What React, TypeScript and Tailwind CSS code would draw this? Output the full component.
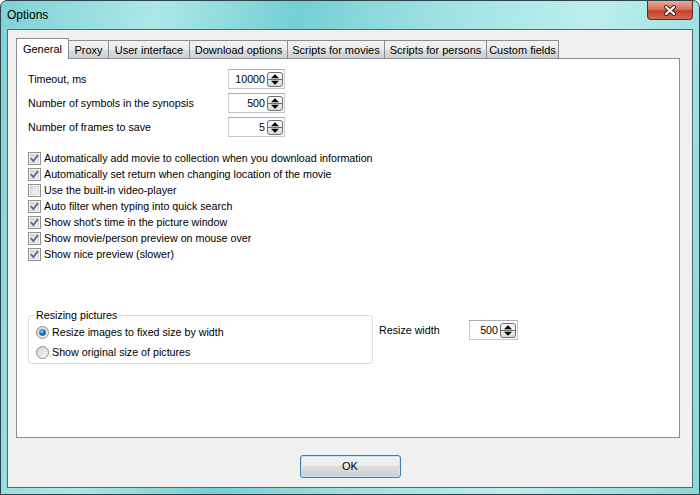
import React from "react";

const tabs = [
  { label: "General", w: "w-[53px]" },
  { label: "Proxy", w: "w-[41px]" },
  { label: "User interface", w: "w-[82px]" },
  { label: "Download options", w: "w-[99px]" },
  { label: "Scripts for movies", w: "w-[98px]" },
  { label: "Scripts for persons", w: "w-[103px]" },
  { label: "Custom fields", w: "w-[73px]" },
];

const checks = [
  { label: "Automatically add movie to collection when you download information", on: true },
  { label: "Automatically set return when changing location of the movie", on: true },
  { label: "Use the built-in video-player", on: false },
  { label: "Auto filter when typing into quick search", on: true },
  { label: "Show shot's time in the picture window", on: true },
  { label: "Show movie/person preview on mouse over", on: true },
  { label: "Show nice preview (slower)", on: true },
];

function SpinArrows() {
  return (
    <svg width="16" height="15" viewBox="0 0 16 15" className="shrink-0">
      <defs>
        <linearGradient id="spinbg" x1="0" y1="0" x2="0" y2="1">
          <stop offset="0" stopColor="#fbfbfb" />
          <stop offset="1" stopColor="#dcdcdc" />
        </linearGradient>
      </defs>
      <rect x="0.5" y="0.5" width="15" height="14" rx="2.5" fill="url(#spinbg)" stroke="#707070" />
      <line x1="1" y1="7.5" x2="15" y2="7.5" stroke="#707070" />
      <path d="M4 6.2 h8 l-4 -4z" fill="#000" />
      <path d="M4 8.8 h8 l-4 4z" fill="#000" />
    </svg>
  );
}

function Spin({ value, className }: { value: string; className: string }) {
  return (
    <div
      className={`flex h-[20px] items-center border border-[#c5c7cc] border-t-[#abadb3] bg-white ${className}`}
    >
      <span className="flex-1 pr-[2px] text-right leading-none">{value}</span>
      <SpinArrows />
      <span className="w-px" />
    </div>
  );
}

function CheckBox({ on }: { on: boolean }) {
  return (
    <svg width="13" height="13" viewBox="0 0 13 13" className="shrink-0">
      <defs>
        <linearGradient id="cbg" x1="0" y1="0" x2="1" y2="1">
          <stop offset="0" stopColor="#d6d6d6" />
          <stop offset="1" stopColor="#fbfbfb" />
        </linearGradient>
      </defs>
      <rect x="0.5" y="0.5" width="12" height="12" fill="#f6f6f6" stroke="#8e8f8f" />
      <rect x="2.5" y="2.5" width="8" height="8" fill="url(#cbg)" stroke="#c4c4c4" strokeWidth="0.6" />
      {on && (
        <path d="M3 6.3 L5.4 9.2 L10 3" fill="none" stroke="#4a5f97" strokeWidth="1.7" />
      )}
    </svg>
  );
}

function Radio({ on }: { on: boolean }) {
  return (
    <svg width="13" height="13" viewBox="0 0 13 13" className="shrink-0">
      <defs>
        <linearGradient id="rbg" x1="0" y1="0" x2="1" y2="1">
          <stop offset="0" stopColor="#cfcfcf" />
          <stop offset="1" stopColor="#fbfbfb" />
        </linearGradient>
        <radialGradient id="rdot" cx="0.4" cy="0.35" r="0.7">
          <stop offset="0" stopColor="#8fd4fa" />
          <stop offset="0.55" stopColor="#1b74b8" />
          <stop offset="1" stopColor="#0d3e6a" />
        </radialGradient>
      </defs>
      <circle cx="6.5" cy="6.5" r="6" fill="url(#rbg)" stroke="#8e8f8f" />
      {on && <circle cx="6.5" cy="6.5" r="3.3" fill="url(#rdot)" />}
    </svg>
  );
}

export default function App() {
  return (
    <div className="w-[700px] h-[495px] font-['Liberation_Sans',Arial,sans-serif] text-[10.7px] text-black">
      <div className="flex h-full w-full flex-col rounded-t-[7px] border border-[#2e4347] bg-[linear-gradient(100deg,#7fd2d6_0%,#ade7e8_20%,#74cfd3_38%,#9fe1e3_56%,#bdeeee_76%,#8ad7da_100%)]">
        <div className="flex h-[28px] items-start justify-between">
          <span className="pl-[6px] pt-[7px] text-[12px] leading-[14px]">Options</span>
          <div className="mr-[6px] flex h-[19px] w-[46px] items-center justify-center rounded-b-[4px] border border-t-0 border-[#6a2b20] bg-[linear-gradient(180deg,#e9ab9c_0%,#d7735d_45%,#c2402a_55%,#d5674d_100%)]">
            <svg width="14" height="11" viewBox="0 0 14 11">
              <path d="M3 2 L11 9 M11 2 L3 9" stroke="#3b1a14" strokeWidth="4" strokeLinecap="round" />
              <path d="M3 2 L11 9 M11 2 L3 9" stroke="#ffffff" strokeWidth="2.2" strokeLinecap="round" />
            </svg>
          </div>
        </div>

        <div className="ml-[6px] flex h-[459px] w-[686px] flex-col border border-[#4c6a70] bg-[#f0f0f0]">
          <div className="pl-[8px] pt-[8px]">
            <div className="flex h-[20px] items-end">
              {tabs.map((t, i) =>
                i === 0 ? (
                  <div
                    key={t.label}
                    className={`relative z-10 -mb-px flex h-[21px] items-center justify-center border border-b-0 border-[#898c95] bg-white text-[11px] ${t.w}`}
                  >
                    {t.label}
                  </div>
                ) : (
                  <div
                    key={t.label}
                    className={`-ml-px flex h-[18px] items-center justify-center border border-b-0 border-[#898c95] bg-[linear-gradient(180deg,#f2f2f2_0%,#ebebeb_50%,#dddddd_51%,#cfcfcf_100%)] pt-px text-[11px] ${t.w}`}
                  >
                    {t.label}
                  </div>
                )
              )}
            </div>

            <div className="h-[380px] w-[664px] border border-[#898c95] bg-white pl-[11px] pt-[10px]">
              <div className="flex flex-col gap-[4px]">
                {[
                  ["Timeout, ms", "10000"],
                  ["Number of symbols in the synopsis", "500"],
                  ["Number of frames to save", "5"],
                ].map(([label, v]) => (
                  <div key={label} className="flex h-[20px] items-center">
                    <span className="w-[200px]">{label}</span>
                    <Spin value={v} className="w-[57px]" />
                  </div>
                ))}
              </div>

              <div className="mt-[13px] flex flex-col">
                {checks.map((c) => (
                  <div key={c.label} className="flex h-[16px] items-center gap-[3px]">
                    <CheckBox on={c.on} />
                    <span>{c.label}</span>
                  </div>
                ))}
              </div>

              <div className="mt-[47px] flex items-start">
                <fieldset className="w-[345px] rounded-[3px] border border-[#d5dfe5] px-[6px] pb-px">
                  <legend className="px-px leading-[13px]">Resizing pictures</legend>
                  <div className="flex h-[20px] items-center gap-[3px] pl-px">
                    <Radio on={true} />
                    <span>Resize images to fixed size by width</span>
                  </div>
                  <div className="flex h-[20px] items-center gap-[3px] pl-px">
                    <Radio on={false} />
                    <span>Show original size of pictures</span>
                  </div>
                </fieldset>
                <div className="ml-[6px] mt-[11px] flex h-[20px] items-center">
                  <span className="w-[90px]">Resize width</span>
                  <Spin value="500" className="w-[49px]" />
                </div>
              </div>
            </div>
          </div>

          <div className="mt-[17px] flex justify-center">
            <button className="h-[23px] w-[101px] rounded-[3px] border border-[#3c7fb1] bg-[linear-gradient(180deg,#f2f2f2_0%,#ebebeb_45%,#dddddd_50%,#cfcfcf_100%)] text-[11px] shadow-[inset_0_0_0_1px_#bfe6fb]">
              OK
            </button>
          </div>
        </div>
      </div>
    </div>
  );
}
